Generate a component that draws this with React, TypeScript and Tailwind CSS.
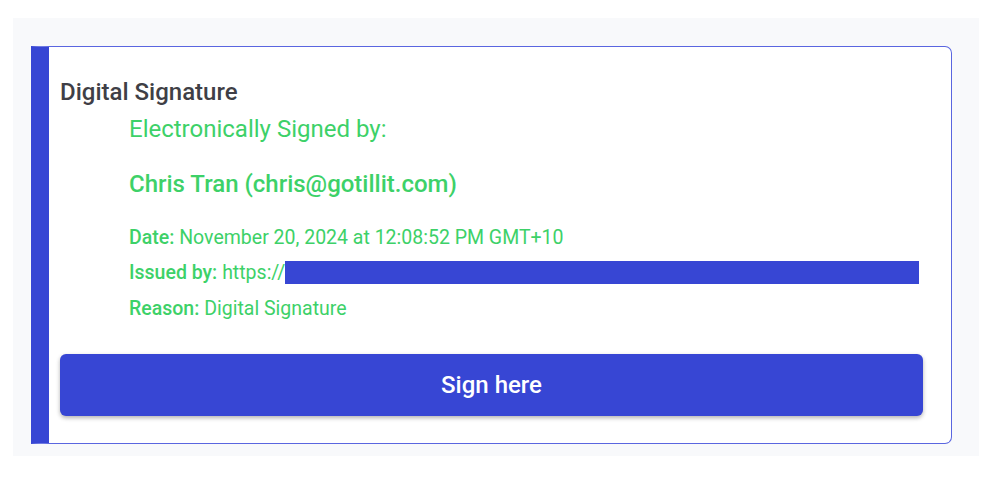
const green = "text-[#3dd168]";

function InfoRow({ label, className = "", children }: { label: string; className?: string; children: React.ReactNode }) {
  return (
    <div className={`flex items-center h-[23px] text-[19.5px] leading-[22px] whitespace-pre ${green} ${className}`}>
      <span className="font-medium">{label} </span>
      {children}
    </div>
  );
}

export default function App() {
  return (
    <div
      className="w-full h-[483px] bg-white pt-[18px] pl-[13px]"
      style={{ fontFamily: "Roboto, 'Liberation Sans', sans-serif" }}
    >
      <div className="w-[966px] h-[438px] bg-[#f8f9fb] pt-[28px] pl-[18px]">
        {/* Signature card */}
        <div className="w-[921px] h-[398px] bg-white border-[1.5px] border-[#5a66e0] border-l-[18px] border-l-[#3746d4] rounded-r-[7px] pt-[31px] pl-[11px] pr-[28px]">
          <h2 className="text-[24px] leading-[28px] font-medium text-[#3f3f46]">Digital Signature</h2>

          <div className="ml-[69px]">
            <p className={`mt-[9px] text-[24px] leading-[28px] ${green}`}>Electronically Signed by:</p>
            <p className={`mt-[27px] text-[24px] leading-[28px] font-medium ${green}`}>
              Chris Tran (chris@gotillit.com)
            </p>

            <div className="mt-[28px]">
              <InfoRow label="Date:">November 20, 2024 at 12:08:52 PM GMT+10</InfoRow>
              <InfoRow label="Issued by:" className="mt-[12px]">
                https://
                <span className="inline-block w-[634px] h-[23px] bg-[#3746d4]" />
              </InfoRow>
              <InfoRow label="Reason:" className="mt-[13px]">Digital Signature</InfoRow>
            </div>
          </div>

          <button className="mt-[34px] w-[863px] h-[62px] rounded-[6px] bg-[#3746d4] text-white text-[24px] font-medium shadow-[0_2px_4px_rgba(0,0,0,0.3)]">
            Sign here
          </button>
        </div>
      </div>
    </div>
  );
}
